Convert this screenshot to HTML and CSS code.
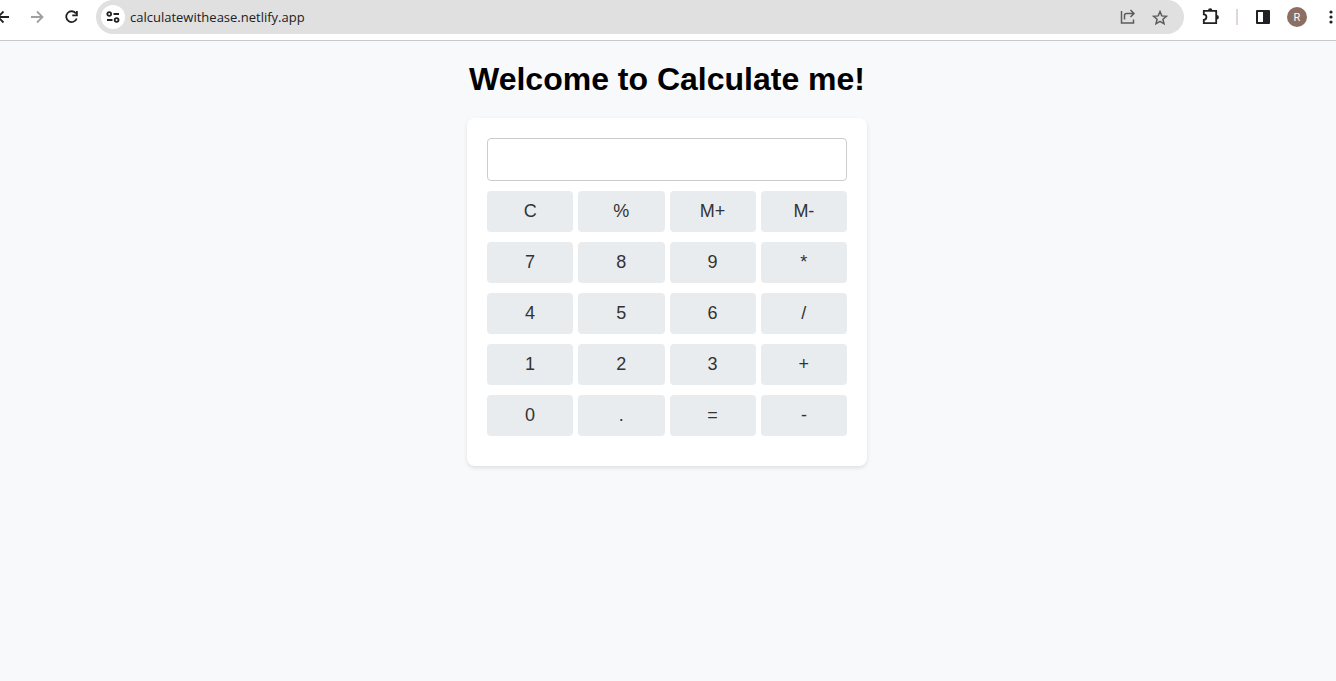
FILE: index.html
```html
<!DOCTYPE html>
<html lang="en">
<head>
<meta charset="utf-8">
<title>Calculate me</title>
<link rel="stylesheet" href="styles.css">
</head>
<body>
<header class="toolbar">
  <nav class="group" aria-label="Navigation">
    <button class="tool" type="button" aria-label="Back"><svg width="14" height="20" viewBox="0 0 14 20"><path d="M9 10H-2M3.500 4.500L-2 10L3.500 15.500" class="line dark"/></svg></button>
    <button class="tool" type="button" aria-label="Forward"><svg width="20" height="20" viewBox="0 0 20 20"><path d="M3 10H14M9 4.500L14.500 10L9 15.500" class="line faded"/></svg></button>
    <button class="tool" type="button" aria-label="Reload"><svg width="20" height="20" viewBox="0 0 20 20"><path d="M14 6.500A5.400 5.400 0 1 0 14.700 11.500" class="line dark"/><path d="M15.800 4V9.300H10.300V7.600H14V4Z" class="fill-dark"/></svg></button>
  </nav>
  <form class="omnibox">
    <button class="site-info" type="button" aria-label="Site information"><svg width="14" height="12" viewBox="0 0 14 12"><path d="M7.500 3H13M1 9H6.500" class="line dark"/><circle cx="3.200" cy="3" r="1.900" class="line dark"/><circle cx="10.600" cy="9" r="1.900" class="line dark"/></svg></button>
    <input class="address" type="text" aria-label="Address" value="calculatewithease.netlify.app">
    <button class="tool" type="button" aria-label="Share"><svg width="20" height="20" viewBox="0 0 20 20"><path d="M3.500 4V16H15.500V12.500M6.500 12.500V8.500Q6.500 6.500 8.500 6.500H15.500M12.500 3L16 6.500L12.500 10" class="line thin"/></svg></button>
    <button class="tool" type="button" aria-label="Bookmark"><svg width="20" height="20" viewBox="0 0 20 20"><path d="M10 4.600L11.800 8.900L16.400 9.300L12.900 12.300L14 16.800L10 14.400L6 16.800L7.100 12.300L3.600 9.300L8.200 8.900Z" class="line thin"/></svg></button>
  </form>
  <div class="group actions">
    <button class="tool" type="button" aria-label="Extensions"><svg width="20" height="20" viewBox="0 0 20 20"><path d="M3.800 3.800H16.200V16.200H3.800V12.800C7.300 12.800 7.300 7.400 3.800 7.400Z" class="line dark"/><path d="M8 3.500A2.200 2.200 0 0 1 12.400 3.500ZM16.700 8A2.200 2.200 0 0 1 16.700 12.400Z" class="fill-dark"/></svg></button>
    <svg class="divider" width="5" height="16" viewBox="0 0 5 16"><path d="M2 0H4V16H2Z"/></svg>
    <button class="tool" type="button" aria-label="Side panel"><svg width="20" height="20" viewBox="0 0 20 20"><path fill-rule="evenodd" d="M4 3H16Q17 3 17 4V16Q17 17 16 17H4Q3 17 3 16V4Q3 3 4 3ZM5 5V15H10V5Z" class="fill-dark"/></svg></button>
    <button class="avatar" type="button" aria-label="Profile">R</button>
    <button class="tool" type="button" aria-label="Menu"><svg width="15" height="20" viewBox="0 0 15 20"><g class="fill-dark"><circle cx="10" cy="5" r="1.600"/><circle cx="10" cy="10" r="1.600"/><circle cx="10" cy="15" r="1.600"/></g></svg></button>
  </div>
</header>
<main class="page">
  <h1 class="title">Welcome to Calculate me!</h1>
  <section class="calculator" aria-label="Calculator">
    <input class="display" type="text" aria-label="Result">
    <div class="keys">
      <button class="key" type="button">C</button>
      <button class="key" type="button">%</button>
      <button class="key" type="button">M+</button>
      <button class="key" type="button">M-</button>
      <button class="key" type="button">7</button>
      <button class="key" type="button">8</button>
      <button class="key" type="button">9</button>
      <button class="key" type="button">*</button>
      <button class="key" type="button">4</button>
      <button class="key" type="button">5</button>
      <button class="key" type="button">6</button>
      <button class="key" type="button">/</button>
      <button class="key" type="button">1</button>
      <button class="key" type="button">2</button>
      <button class="key" type="button">3</button>
      <button class="key" type="button">+</button>
      <button class="key" type="button">0</button>
      <button class="key" type="button">.</button>
      <button class="key" type="button">=</button>
      <button class="key" type="button">-</button>
    </div>
  </section>
</main>
</body>
</html>
```
FILE: styles.css
```css
* {
  box-sizing: border-box;
}

body {
  margin: 0;
  background: #f8f9fb;
  font-family: "Liberation Sans", Arial, sans-serif;
}

button {
  border: 0;
  padding: 0;
  cursor: pointer;
}

svg {
  display: block;
}

.toolbar {
  display: flex;
  align-items: center;
  padding-bottom: 6px;
  border-bottom: 1px solid #c8c8c8;
  background: #fff;
}

.group {
  display: flex;
  align-items: center;
  gap: 14px;
  padding-right: 14px;
}

.actions {
  padding: 0 0 0 16px;
}

.tool {
  flex: none;
  background: none;
}

.line {
  fill: none;
  stroke-width: 1.8;
}

.dark {
  stroke: #202124;
}

.faded {
  stroke: #a0a0a0;
}

.thin {
  stroke: #5b5b5b;
  stroke-width: 1.5;
}

.fill-dark {
  fill: #202124;
}

.divider {
  fill: #e0d8d5;
}

.omnibox {
  flex: 1;
  display: flex;
  align-items: center;
  gap: 12px;
  height: 34px;
  padding: 0 14px 0 5px;
  border-radius: 17px;
  background: #e0e0e0;
}

.site-info {
  display: grid;
  place-items: center;
  width: 24px;
  height: 24px;
  border-radius: 50%;
  background: #fff;
}

.address {
  flex: 1;
  min-width: 0;
  padding: 0;
  margin-left: -7px;
  border: 0;
  background: none;
  color: #202124;
  font: 13px "Open Sans", "Noto Sans", sans-serif;
}

.avatar {
  width: 20px;
  height: 20px;
  border-radius: 50%;
  background: #8d6e63;
  color: #fff;
  font: 11px Roboto, sans-serif;
}

.page {
  padding: 20px 22px 20px 20px;
}

.title {
  margin: 0 0 20px;
  font-size: 32px;
  line-height: 37px;
  text-align: center;
  color: #000;
}

.calculator {
  max-width: 400px;
  margin: 0 auto;
  padding: 20px 20px 30px;
  border-radius: 8px;
  background: #fff;
  box-shadow: 0 2px 4px rgba(0, 0, 0, 0.1);
}

.display {
  display: block;
  width: 100%;
  margin-bottom: 10px;
  padding: 10px;
  border: 1px solid #ccc;
  border-radius: 4px;
  font: 18px/21px "Liberation Sans", Arial, sans-serif;
}

.keys {
  display: grid;
  grid-template-columns: repeat(4, 1fr);
  gap: 10px 5px;
}

.key {
  padding: 10px;
  border-radius: 4px;
  background: #e9ecef;
  color: #333;
  font: 18px/21px "Liberation Sans", Arial, sans-serif;
}
```
